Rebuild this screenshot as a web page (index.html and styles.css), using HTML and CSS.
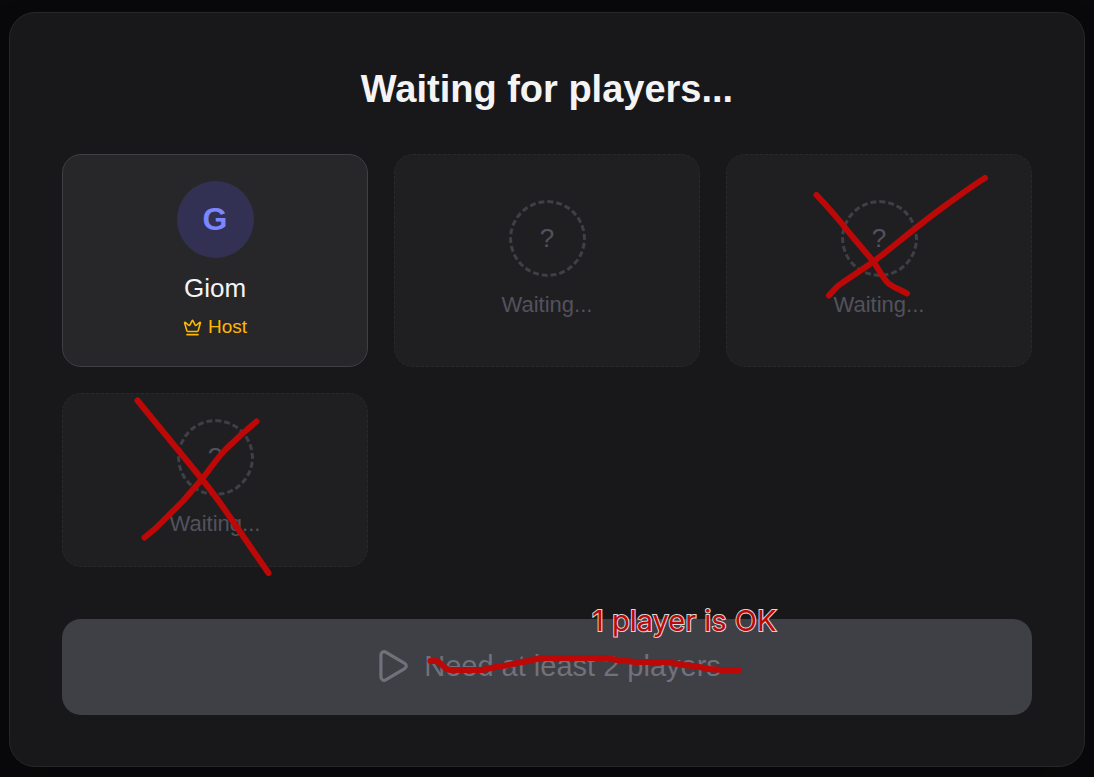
FILE: index.html
```html
<!DOCTYPE html>
<html lang="en">
<head>
  <meta charset="utf-8">
  <meta name="viewport" content="width=device-width, initial-scale=1">
  <title>Lobby</title>
  <link rel="stylesheet" href="styles.css">
</head>
<body>
  <main class="lobby">
    <h1 class="title">Waiting for players...</h1>
    <ul class="players">
      <li class="player player-joined">
        <span class="avatar">G</span>
        <span class="name">Giom</span>
        <span class="host">
          <svg class="crown" viewBox="0 0 24 24" aria-hidden="true">
            <path d="M11.562 3.266a.5.5 0 0 1 .876 0L15.39 8.87a1 1 0 0 0 1.516.294L21.183 5.5a.5.5 0 0 1 .798.519l-2.834 10.246a1 1 0 0 1-.956.734H5.81a1 1 0 0 1-.957-.734L2.02 6.02a.5.5 0 0 1 .798-.519l4.276 3.664a1 1 0 0 0 1.516-.294z"/>
            <path d="M5 21h14"/>
          </svg>
          Host
        </span>
      </li>
      <li class="player">
        <span class="avatar avatar-empty">?</span>
        <span class="waiting">Waiting...</span>
      </li>
      <li class="player">
        <span class="avatar avatar-empty">?</span>
        <span class="waiting">Waiting...</span>
        <svg class="marker" viewBox="0 0 306 213" aria-hidden="true">
          <path d="M90.500 41C103 54 114 67 125 81L147 107C152 114 156 123 162 129C168 134 175 136 181 139.500"/>
          <path d="M103 141.500L108 136Q111 132 116 129L147 108C168 92 190 73 216 54C231 43 246 32 259 24"/>
        </svg>
      </li>
      <li class="player">
        <span class="avatar avatar-empty">?</span>
        <span class="waiting">Waiting...</span>
        <svg class="marker" viewBox="0 0 306 174" aria-hidden="true">
          <path d="M75.500 7.500L139 85C150 98 159 111 170 127L206.500 180"/>
          <path d="M82.500 144.500L94 135L121 108L140 86C148 76 155 65 165 55L180 41L194.500 28.500"/>
        </svg>
      </li>
    </ul>
    <div class="action">
      <button class="start" type="button" disabled>
        <svg class="play" viewBox="0 0 24 24" aria-hidden="true">
          <path d="M5 5a2 2 0 0 1 3.008-1.728l11.997 6.998a2 2 0 0 1 .003 3.458l-12 7A2 2 0 0 1 5 19z"/>
        </svg>
        Need at least 2 players
      </button>
      <svg class="marker" viewBox="0 0 970 96" aria-hidden="true">
        <path d="M368.500 42H374C380 43 381 50 388 51H420L434 48L447 46L460 43L466 42L479 39H544L555 41L573 43H604L622 46L632 47L648 50L660 51H677"/>
      </svg>
      <span class="note">1 player is OK</span>
    </div>
  </main>
</body>
</html>
```
FILE: styles.css
```css
* {
  box-sizing: border-box;
}

body {
  margin: 0;
  padding: 12px 9px 10px;
  background: #09090b;
  color: #f4f4f5;
  font-family: "Liberation Sans", Arial, sans-serif;
}

.lobby {
  padding: 52px 52px 51px;
  border: 1px solid #27272a;
  border-radius: 26px;
  background: #18181b;
  box-shadow: 0 40px 80px -20px rgba(0, 0, 0, 0.25);
}

.title {
  margin: 0 0 40px;
  font-size: 38px;
  line-height: 49px;
  text-align: center;
}

.players {
  display: grid;
  grid-template-columns: repeat(3, 1fr);
  gap: 26px;
  margin: 0 0 52px;
  padding: 0;
  list-style: none;
}

.player {
  position: relative;
  display: flex;
  flex-direction: column;
  align-items: center;
  justify-content: center;
  padding: 25px 26px 27px;
  border: 1px dashed #29292c;
  border-radius: 19px;
  background: #1f1f22;
}

.player-joined {
  padding: 26px;
  border: 1px solid #3f3f46;
  background: #27272a;
}

.avatar {
  display: flex;
  align-items: center;
  justify-content: center;
  width: 77px;
  height: 77px;
  margin-bottom: 13px;
  border-radius: 50%;
  background: #323153;
  color: #7c86ff;
  font-size: 32px;
  font-weight: 700;
}

.avatar-empty {
  border: 3px dashed #3f3f46;
  background: none;
  color: #52525c;
  font-size: 26px;
  font-weight: 400;
}

.name {
  margin-bottom: 8px;
  font-size: 26px;
  line-height: 35px;
}

.host {
  display: flex;
  align-items: center;
  gap: 6px;
  color: #ffb900;
  font-size: 19px;
  line-height: 26px;
}

.crown,
.play {
  fill: none;
  stroke: currentColor;
  stroke-width: 2;
  stroke-linecap: round;
  stroke-linejoin: round;
}

.crown {
  width: 19px;
  height: 19px;
}

.waiting {
  color: #52525c;
  font-size: 22px;
  line-height: 30px;
}

.action {
  position: relative;
}

.start {
  display: flex;
  align-items: center;
  justify-content: center;
  gap: 13px;
  width: 100%;
  height: 96px;
  padding: 0 0 2px;
  border: 0;
  border-radius: 19px;
  background: #3f3f46;
  color: #71717b;
  font-family: inherit;
  font-size: 29px;
}

.play {
  width: 38px;
  height: 38px;
}

.marker {
  position: absolute;
  inset: -1px;
  width: calc(100% + 2px);
  height: calc(100% + 2px);
  overflow: visible;
  fill: none;
  stroke: #bd0808;
  stroke-width: 6;
  stroke-linecap: round;
  stroke-linejoin: round;
  pointer-events: none;
}

.action .marker {
  inset: 0;
  width: 100%;
  height: 100%;
}

.note {
  position: absolute;
  top: -16px;
  left: calc(50% + 45px);
  color: #bd0808;
  font-family: Inter, sans-serif;
  font-size: 29px;
  line-height: 36px;
  white-space: nowrap;
  -webkit-text-stroke: 2px #d8d8d8;
  paint-order: stroke fill;
}
```
